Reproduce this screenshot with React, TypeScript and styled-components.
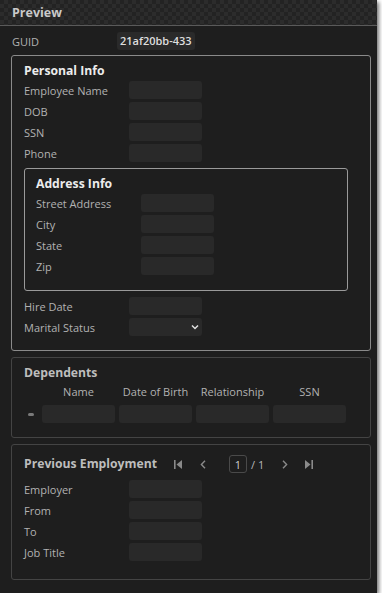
import React from 'react'
import styled, { createGlobalStyle, css } from 'styled-components'

const GlobalStyle = createGlobalStyle`
    html, body {
        margin: 0;
        padding: 0;
        background: #ffffff;
    }
    body {
        font-family: "Open Sans", "Liberation Sans", sans-serif;
        font-size: 11px;
        color: #b4b4b4;
    }
`

const Window = styled.div`
    width: 377px;
    height: 593px;
    background: #1e1e1e;
    box-shadow: 2px 2px 4px rgba(0, 0, 0, 0.55);
    display: flex;
    flex-direction: column;
    overflow: hidden;
`
const Header = styled.div`
    height: 25px;
    display: flex;
    align-items: center;
    padding-left: 12px;
    border-bottom: 1px solid #5a5a5a;
    background-color: #262626;
    background-image: repeating-conic-gradient(#2c2c2c 0% 25%, #232323 0% 50%);
    background-size: 8px 8px;
    font-size: 12.5px;
    font-weight: 700;
    color: #c9c9c9;
`
const Body = styled.div`
    display: flex;
    flex-direction: column;
    padding: 6px 6px 0 11px;
`
const GuidRow = styled.div`
    display: grid;
    grid-template-columns: 105px auto;
    align-items: center;
    height: 18px;
    padding-left: 1px;
    margin-bottom: 5px;
`
const GuidValue = styled.div`
    justify-self: start;
    height: 18px;
    line-height: 18px;
    padding: 0 3px;
    background: #2a2a2a;
    border-radius: 3px;
    color: #dedede;
    font-weight: 600;
`

type TTone = 'bright' | 'dim'
interface IGroupProps {
    tone?: TTone
}
const Group = styled.div<IGroupProps>`
    border-radius: 3px;
    padding: 6px 12px 14px 12px;
    display: flex;
    flex-direction: column;
    ${(props) => props.tone === 'dim'
        ? css`border: 1px solid #444;`
        : css`border: 1px solid #8a8a8a;`}
    & + & {
        margin-top: 6px;
    }
`
const NestedGroup = styled(Group)`
    margin: 6px 10px 6px 0;
    padding-left: 11px;
    padding-bottom: 15px;
    border-color: #9a9a9a;
`
const Title = styled.div<IGroupProps>`
    font-size: 12.2px;
    font-weight: 700;
    line-height: 18px;
    margin-bottom: 1px;
    white-space: nowrap;
    color: ${(props) => props.tone === 'dim' ? '#bdbdbd' : '#ececec'};
`
const Fields = styled.div`
    display: grid;
    grid-template-columns: 105px 73px;
    grid-auto-rows: 18px;
    row-gap: 3px;
    align-items: center;
`
const Label = styled.div`
    color: #b2b2b2;
    white-space: nowrap;
`
const Input = styled.div`
    height: 18px;
    background: #292929;
    border-radius: 3px;
`
const Select = styled(Input)`
    display: flex;
    align-items: center;
    justify-content: flex-end;
    padding-right: 3px;
    color: #e0e0e0;
`

const Table = styled.div`
    display: grid;
    grid-template-columns: 14px repeat(4, 73px);
    column-gap: 4px;
    align-items: center;
`
const ColHead = styled.div`
    text-align: center;
    line-height: 16px;
    margin: 1px 0 5px;
    color: #b2b2b2;
    white-space: nowrap;
`
const Handle = styled.div`
    width: 6px;
    height: 3px;
    margin-left: 4px;
    border-radius: 2px;
    background: #7a7a7a;
`

const TitleBar = styled.div`
    display: flex;
    align-items: center;
    height: 18px;
    margin: 4px 0 7px;
`
const Pager = styled.div`
    display: flex;
    align-items: center;
    margin-left: 17px;
    color: #8a8a8a;
`
const PagerButton = styled.span<{ space?: number }>`
    display: inline-flex;
    align-items: center;
    margin-right: ${(props) => props.space ?? 0}px;
`
const PageBox = styled.div`
    width: 16px;
    height: 16px;
    border: 1px solid #4a4a4a;
    border-radius: 3px;
    display: flex;
    align-items: center;
    justify-content: center;
    color: #d0d0d0;
`
const PageTotal = styled.span`
    margin: 0 18px 0 4px;
    color: #b8b8b8;
`

const Chevron = () => (
    <svg width="8" height="6" viewBox="0 0 8 6">
        <path d="M1 1.5 L4 4.5 L7 1.5" fill="none" stroke="currentColor" strokeWidth="1.5" />
    </svg>
)
const FirstIcon = () => (
    <svg width="8" height="9" viewBox="0 0 8 9">
        <rect x="0" y="0" width="1.6" height="9" fill="currentColor" />
        <path d="M8 0 L2.5 4.5 L8 9 Z" fill="currentColor" />
    </svg>
)
const LastIcon = () => (
    <svg width="8" height="9" viewBox="0 0 8 9">
        <path d="M0 0 L5.5 4.5 L0 9 Z" fill="currentColor" />
        <rect x="6.4" y="0" width="1.6" height="9" fill="currentColor" />
    </svg>
)
const PrevIcon = () => (
    <svg width="6" height="9" viewBox="0 0 6 9">
        <path d="M5 0.8 L1.4 4.5 L5 8.2" fill="none" stroke="currentColor" strokeWidth="1.4" />
    </svg>
)
const NextIcon = () => (
    <svg width="6" height="9" viewBox="0 0 6 9">
        <path d="M1 0.8 L4.6 4.5 L1 8.2" fill="none" stroke="currentColor" strokeWidth="1.4" />
    </svg>
)

const FieldList = ({ labels }: { labels: string[] }) => (
    <Fields>
        {labels.map((l) => (
            <React.Fragment key={l}>
                <Label>{l}</Label>
                <Input />
            </React.Fragment>
        ))}
    </Fields>
)

export default function App() {
    return (
        <>
            <GlobalStyle />
            <Window>
                <Header>Preview</Header>
                <Body>
                    <GuidRow>
                        <Label>GUID</Label>
                        <GuidValue>21af20bb-433</GuidValue>
                    </GuidRow>

                    <Group>
                        <Title>Personal Info</Title>
                        <FieldList labels={['Employee Name', 'DOB', 'SSN', 'Phone']} />
                        <NestedGroup>
                            <Title>Address Info</Title>
                            <FieldList labels={['Street Address', 'City', 'State', 'Zip']} />
                        </NestedGroup>
                        <Fields>
                            <Label>Hire Date</Label>
                            <Input />
                            <Label>Marital Status</Label>
                            <Select><Chevron /></Select>
                        </Fields>
                    </Group>

                    <Group tone="dim">
                        <Title tone="dim">Dependents</Title>
                        <Table>
                            <span />
                            <ColHead>Name</ColHead>
                            <ColHead>Date of Birth</ColHead>
                            <ColHead>Relationship</ColHead>
                            <ColHead>SSN</ColHead>
                            <Handle />
                            <Input />
                            <Input />
                            <Input />
                            <Input />
                        </Table>
                    </Group>

                    <Group tone="dim" style={{ paddingBottom: 18 }}>
                        <TitleBar>
                            <Title tone="dim" style={{ margin: 0 }}>Previous Employment</Title>
                            <Pager>
                                <PagerButton space={18}><FirstIcon /></PagerButton>
                                <PagerButton space={23}><PrevIcon /></PagerButton>
                                <PageBox>1</PageBox>
                                <PageTotal>/ 1</PageTotal>
                                <PagerButton space={17}><NextIcon /></PagerButton>
                                <PagerButton><LastIcon /></PagerButton>
                            </Pager>
                        </TitleBar>
                        <FieldList labels={['Employer', 'From', 'To', 'Job Title']} />
                    </Group>
                </Body>
            </Window>
        </>
    )
}
